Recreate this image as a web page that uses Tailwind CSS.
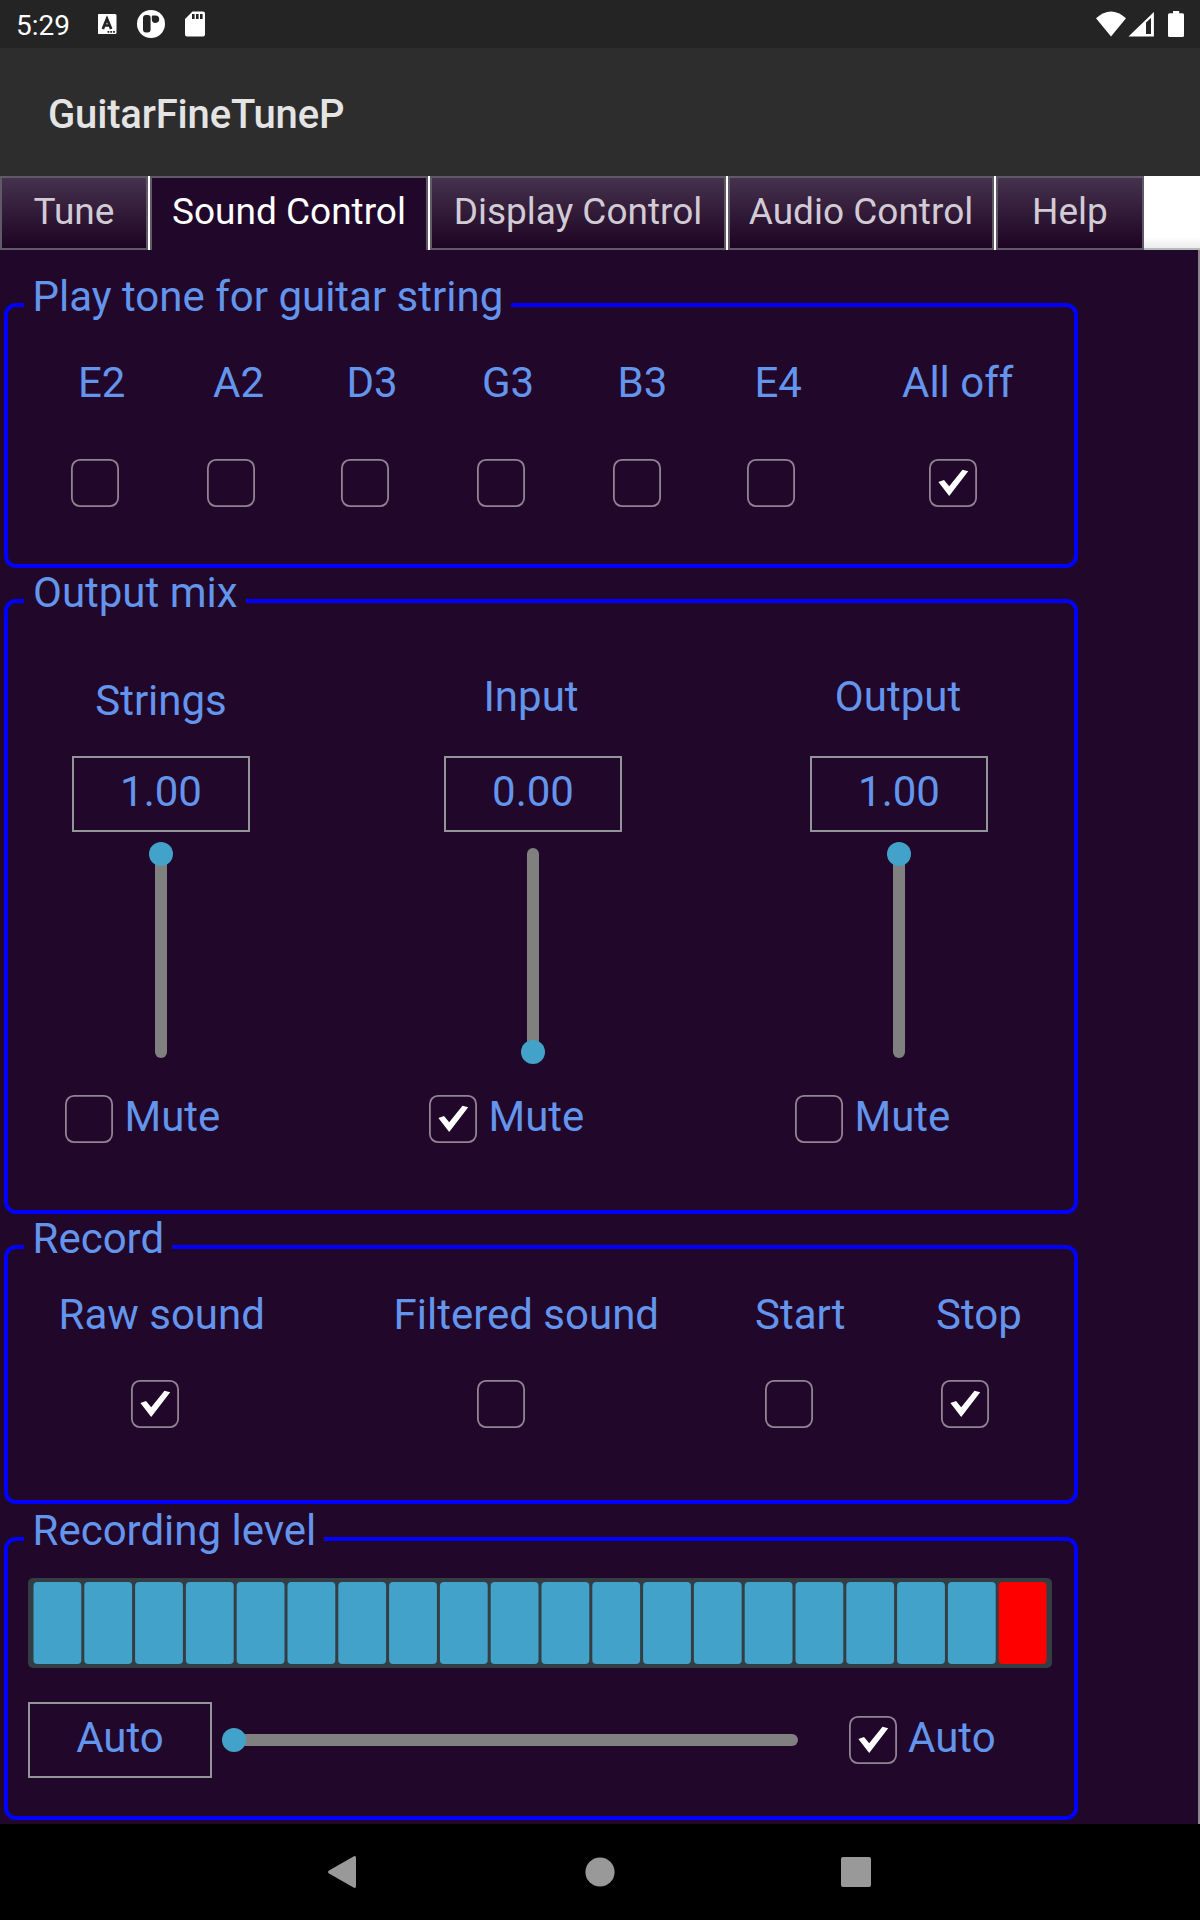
<!DOCTYPE html>
<html lang="en">
<head>
<meta charset="utf-8">
<title>GuitarFineTuneP</title>
<script src="https://cdn.jsdelivr.net/npm/@tailwindcss/browser@4"></script>
</head>
<body class="w-[1200px] h-[1920px] overflow-hidden bg-[#210729] font-['Roboto',sans-serif] text-[42px] leading-[50px] text-[#6495ed] flex flex-col whitespace-nowrap">

<svg width="0" height="0" class="hidden">
  <symbol id="off" viewBox="0 0 48 48"><rect x=".9" y=".9" width="46.2" height="46.2" rx="8" fill="none" stroke="#908394" stroke-width="1.8"/></symbol>
  <symbol id="on" viewBox="0 0 48 48"><rect x=".9" y=".9" width="46.2" height="46.2" rx="8" fill="none" stroke="#908394" stroke-width="1.8"/><path d="M9.4 23L15 21L20.2 27.300L33.500 10.800L39.200 12.300L20.2 37Z" fill="#fff"/></symbol>
</svg>

<!-- Status bar -->
<header class="h-12 shrink-0 bg-[#242424] flex items-center text-white">
  <span class="ml-4 w-[82px] text-[28px] leading-8 mt-[3px]">5:29</span>
  <svg class="w-[107px] h-12" viewBox="98 0 107 48" fill="#fff">
    <rect x="97.5" y="14" width="19" height="20" rx="1.5"/>
    <path d="M102.8 29L107 18.8L111.2 29M104.2 25.5H109.8" fill="none" stroke="#242424" stroke-width="2.7"/>
    <path d="M107.5 31h1.8v1.8h-1.8zM110.3 31h1.8v1.8h-1.8zM113.1 31h1.8v1.8h-1.8z" fill="#242424"/>
    <circle cx="151" cy="24" r="14"/>
    <rect x="143" y="15" width="7.6" height="17.6" rx="3" fill="#242424"/>
    <path d="M151.8 16.5q0-1 1-1h2.5a3.7 3.7 0 1 1-3.5 3.7z" fill="#242424"/>
    <path d="M192.500 11.500H203a2 2 0 0 1 2 2V34.500a2 2 0 0 1-2 2H187a2 2 0 0 1-2-2V19z"/>
    <path d="M192 14h2.600v5h-2.600zM196 14h2.600v5h-2.600zM200 14h2.600v5h-2.600z" fill="#242424"/>
  </svg>
  <svg class="ml-auto mr-4 w-[89px] h-12" viewBox="1095 0 89 48" fill="#fff">
    <path d="M1096 18.300Q1111 4.900 1126 18.300L1111 36.500Z"/>
    <path fill-rule="evenodd" d="M1128.500 36.600L1153.900 12V36.600ZM1146 34H1151V18L1146 22.500Z"/>
    <path d="M1173 11h6.200v2.200h3.300a1.500 1.500 0 0 1 1.500 1.500V35.500a1.500 1.500 0 0 1-1.500 1.500h-13a1.500 1.500 0 0 1-1.500-1.500V14.700a1.500 1.500 0 0 1 1.500-1.500h3.500z"/>
  </svg>
</header>

<!-- App bar -->
<div class="h-32 shrink-0 bg-[#2d2d2d] pl-12 pt-11 text-[40px] leading-[46px] font-medium tracking-[-0.17px] text-[#e4e4e4]">GuitarFineTuneP</div>

<!-- Tabs -->
<nav class="h-[74px] shrink-0 bg-white flex gap-[2px] text-[37px] leading-[44px] text-[#d2cbd5] text-center">
  <div class="w-[148px] border-2 border-[#605968] bg-linear-to-b from-[#46324e] to-[#1d0522] pt-3">Tune</div>
  <div class="w-[278px] border-2 border-b-0 border-[#605968] bg-[#210729] pt-3 text-white">Sound Control</div>
  <div class="w-[296px] border-2 border-[#605968] bg-linear-to-b from-[#46324e] to-[#1d0522] pt-3">Display Control</div>
  <div class="w-[266px] border-2 border-[#605968] bg-linear-to-b from-[#46324e] to-[#1d0522] pt-3">Audio Control</div>
  <div class="w-[148px] border-2 border-[#605968] bg-linear-to-b from-[#46324e] to-[#1d0522] pt-3">Help</div>
  <div class="-ml-[2px] flex-1 border-b-2 border-[#b4bcba] bg-linear-to-b from-white from-85% to-[#ececec]"></div>
</nav>

<main class="h-[1574px] shrink-0 border-r-2 border-[#8b868d] pl-1 pt-[53px]">

  <!-- Play tone -->
  <section class="w-[1074px] h-[265px] border-4 border-[#00f] rounded-xl">
    <h2 class="w-fit -mt-[35px] ml-4 pl-[8.5px] pr-2 bg-[#210729]">Play tone for guitar string</h2>
    <div class="mt-9 ml-[70px] grid grid-cols-[135px_133.5px_135.5px_135.500px_137px_147.500px_auto]">
      <span>E2</span><span>A2</span><span>D3</span><span>G3</span><span>B3</span><span>E4</span><span>All off</span>
    </div>
    <div class="mt-[51px] ml-[63px] grid grid-cols-[136px_134px_136px_136px_134px_182px_auto]">
      <svg class="size-12"><use href="#off"/></svg>
      <svg class="size-12"><use href="#off"/></svg>
      <svg class="size-12"><use href="#off"/></svg>
      <svg class="size-12"><use href="#off"/></svg>
      <svg class="size-12"><use href="#off"/></svg>
      <svg class="size-12"><use href="#off"/></svg>
      <svg class="size-12"><use href="#on"/></svg>
    </div>
  </section>

  <!-- Output mix -->
  <section class="mt-[31px] w-[1074px] h-[615px] border-4 border-[#00f] rounded-xl">
    <h2 class="w-fit -mt-[35px] ml-4 pl-[9px] pr-2 bg-[#210729]">Output mix</h2>
    <div class="ml-[57px] grid grid-cols-[364px_366px_auto]">
      <div>
        <div class="ml-[7px] w-[178px] flex flex-col items-center">
          <span class="mt-[58px]">Strings</span>
          <div class="mt-[30px] w-full h-[76px] border-2 border-[#8f9598] pt-[9px] text-center">1.00</div>
          <svg class="mt-[10px] w-6 h-[222px]"><rect x="6" y="6" width="12" height="210" rx="6" fill="#808080"/><circle cx="12" cy="12" r="12" fill="#43a2ca"/></svg>
        </div>
        <div class="mt-7 flex items-start gap-[11.5px]"><svg class="mt-[3px] size-12"><use href="#off"/></svg><span>Mute</span></div>
      </div>
      <div>
        <div class="ml-[15px] w-[178px] flex flex-col items-center">
          <span class="mt-[54px] mr-1">Input</span>
          <div class="mt-[34px] w-full h-[76px] border-2 border-[#8f9598] pt-[9px] text-center">0.00</div>
          <svg class="mt-[10px] w-6 h-[222px]"><rect x="6" y="6" width="12" height="210" rx="6" fill="#808080"/><circle cx="12" cy="210" r="12" fill="#43a2ca"/></svg>
        </div>
        <div class="mt-7 flex items-start gap-[11.5px]"><svg class="mt-[3px] size-12"><use href="#on"/></svg><span>Mute</span></div>
      </div>
      <div>
        <div class="ml-[15px] w-[178px] flex flex-col items-center">
          <span class="mt-[54px] mr-[2px]">Output</span>
          <div class="mt-[34px] w-full h-[76px] border-2 border-[#8f9598] pt-[9px] text-center">1.00</div>
          <svg class="mt-[10px] w-6 h-[222px]"><rect x="6" y="6" width="12" height="210" rx="6" fill="#808080"/><circle cx="12" cy="12" r="12" fill="#43a2ca"/></svg>
        </div>
        <div class="mt-7 flex items-start gap-[11.5px]"><svg class="mt-[3px] size-12"><use href="#off"/></svg><span>Mute</span></div>
      </div>
    </div>
  </section>

  <!-- Record -->
  <section class="mt-[31px] w-[1074px] h-[259px] border-4 border-[#00f] rounded-xl">
    <h2 class="w-fit -mt-[35px] ml-4 pl-[8.5px] pr-2 bg-[#210729]">Record</h2>
    <div class="mt-[26px] ml-[50.5px] grid grid-cols-[335px_361.500px_181px_auto]">
      <span>Raw sound</span><span>Filtered sound</span><span>Start</span><span>Stop</span>
    </div>
    <div class="mt-10 ml-[123px] grid grid-cols-[346px_288px_176px_auto]">
      <svg class="size-12"><use href="#on"/></svg>
      <svg class="size-12"><use href="#off"/></svg>
      <svg class="size-12"><use href="#off"/></svg>
      <svg class="size-12"><use href="#on"/></svg>
    </div>
  </section>

  <!-- Recording level -->
  <section class="mt-[33px] w-[1074px] h-[283px] border-4 border-[#00f] rounded-xl">
    <h2 class="w-fit -mt-[35px] ml-4 pl-[8.5px] pr-2 bg-[#210729]">Recording level</h2>
    <svg id="meter" class="mt-[22px] ml-5 w-[1024px] h-[90px]"><rect width="1024" height="90" rx="5" fill="#333e44"/></svg>
    <div class="mt-[34px] ml-5 flex items-start">
      <div class="w-[184px] h-[76px] border-2 border-[#8f9598] pt-[9px] text-center">Auto</div>
      <svg class="ml-[10px] mt-[26px] w-[582px] h-6"><rect x="6" y="6" width="570" height="12" rx="6" fill="#808080"/><circle cx="12" cy="12" r="12" fill="#43a2ca"/></svg>
      <svg class="ml-[45px] mt-[14px] size-12"><use href="#on"/></svg>
      <span class="ml-[11px] mt-[11px]">Auto</span>
    </div>
  </section>
</main>

<!-- Navigation bar -->
<footer class="h-24 shrink-0 bg-black">
  <svg class="w-[1200px] h-24" fill="#999">
    <path d="M329 46.500L353.500 32.400Q356 31.300 356 34V62Q356 64.700 353.500 63.600L329 49.500Q327 48 329 46.500Z"/>
    <circle cx="600" cy="48" r="14.600"/>
    <rect x="841" y="33" width="30" height="30" rx="2"/>
  </svg>
</footer>

<script>
  const meter = document.getElementById('meter');
  for (let i = 0; i < 20; i++) {
    const r = document.createElementNS('http://www.w3.org/2000/svg', 'rect');
    r.setAttribute('x', 5.5 + i * 50.8);
    r.setAttribute('y', 4);
    r.setAttribute('width', 47.8);
    r.setAttribute('height', 82);
    r.setAttribute('rx', 4);
    r.setAttribute('fill', i === 19 ? '#ff0000' : '#43a2ca');
    meter.appendChild(r);
  }
</script>
</body>
</html>
